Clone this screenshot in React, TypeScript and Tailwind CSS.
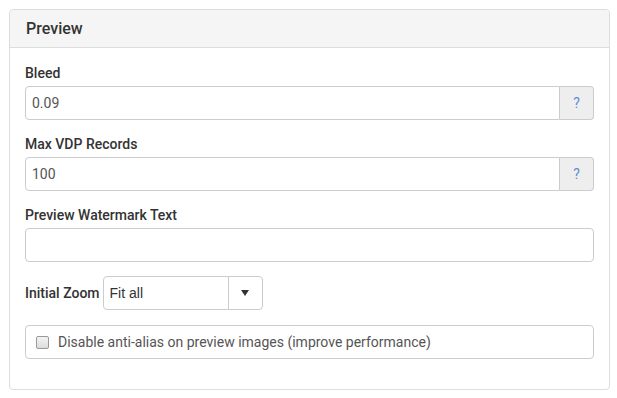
import React from "react";

function HelpInput({ value }: { value: string }) {
  return (
    <div className="flex h-[34px]">
      <div className="flex-1 flex items-center border border-[#ccc] rounded-l-[4px] px-[6px] text-[14px] text-[#555] bg-white">
        {value}
      </div>
      <div className="w-[34px] flex items-center justify-center border border-l-0 border-[#ccc] rounded-r-[4px] bg-[#eee] text-[14px] text-[#5b8dd6]">
        ?
      </div>
    </div>
  );
}

export default function App() {
  return (
    <div className="w-[617px] h-[398px] bg-white pt-[9px] pl-[9px] font-['Roboto',sans-serif]">
      <div className="w-[601px] h-[381px] border border-[#ddd] rounded-[4px] flex flex-col">
        <div className="h-[38px] bg-[#f5f5f5] border-b border-[#ddd] rounded-t-[4px] px-[16px] flex items-center text-[16px] font-medium text-[#333]">
          Preview
        </div>
        <div className="pt-[15px] px-[15px]">
          <div className="mb-[14px]">
            <div className="leading-[20px] text-[14px] font-medium text-[#333] mb-[3px]">Bleed</div>
            <HelpInput value="0.09" />
          </div>
          <div className="mb-[14px]">
            <div className="leading-[20px] text-[14px] font-medium text-[#333] mb-[3px]">Max VDP Records</div>
            <HelpInput value="100" />
          </div>
          <div className="mb-[14px]">
            <div className="leading-[20px] text-[14px] font-medium text-[#333] mb-[3px]">Preview Watermark Text</div>
            <div className="h-[34px] border border-[#ccc] rounded-[4px] bg-white" />
          </div>
          <div className="mb-[15px] flex items-center">
            <span className="text-[14px] font-medium text-[#333] mr-[3px]">Initial Zoom</span>
            <div className="w-[160px] h-[34px] flex border border-[#ccc] rounded-[4px] bg-white">
              <div className="flex-1 flex items-center px-[6px] text-[14px] text-[#333] font-['Liberation_Sans',Arial,sans-serif]">
                Fit all
              </div>
              <div className="w-[34px] border-l border-[#ccc] flex items-center justify-center">
                <svg width="8" height="6" viewBox="0 0 8 6">
                  <path d="M0 0 H8 L4 6 Z" fill="#333" />
                </svg>
              </div>
            </div>
          </div>
          <div className="h-[34px] border border-[#ccc] rounded-[4px] flex items-center pl-[10px]">
            <span className="w-[13px] h-[13px] rounded-[2px] border border-[#999] bg-gradient-to-b from-[#f4f4f4] to-[#dcdcdc] mr-[9px]" />
            <span className="text-[14px] text-[#555]">Disable anti-alias on preview images (improve performance)</span>
          </div>
        </div>
      </div>
    </div>
  );
}
